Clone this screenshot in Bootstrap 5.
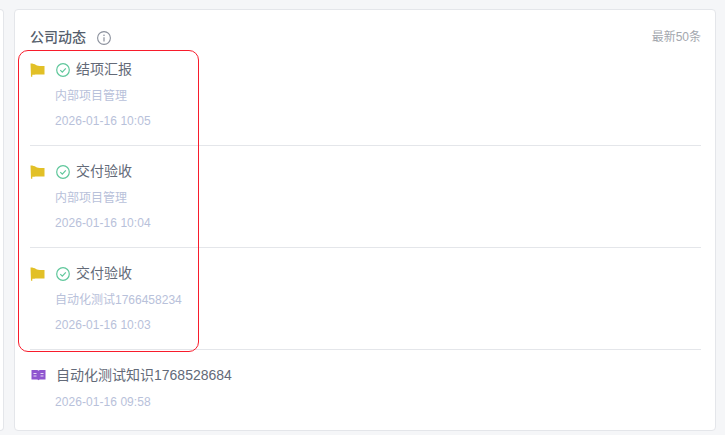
<!DOCTYPE html>
<html lang="en">
<head>
    <meta charset="UTF-8">
    <meta name="viewport" content="width=device-width, initial-scale=1.0">
    <title>公司动态</title>
    <link rel="stylesheet" href="https://cdn.jsdelivr.net/npm/bootstrap@5.3.0/dist/css/bootstrap.min.css">
    <style>
        html, body { height: 100%; overflow: hidden; }
        body {
            background: #f5f6f8;
            font-family: "Liberation Sans", "Noto Sans CJK SC", sans-serif;
        }
        .page-wrap { height: 435px; padding: 9px 9px 4px 0; gap: 10px; }
        .side-stub {
            width: 4px;
            background: #fff;
            border: 1px solid #e4e6ea;
            border-left: 0;
            border-radius: 0 4px 4px 0;
        }
        .feed-card {
            border: 1px solid #e4e6ea;
            border-radius: 4px;
            padding: 0 14px 0 15px;
        }
        .feed-head { height: 34px; padding-top: 20px; }
        .feed-title { font-size: 14px; line-height: 14px; font-weight: 500; color: #555e6c; }
        .info-mark { margin: 2px 0 0 3px; }
        .feed-count { font-size: 12px; line-height: 14px; color: #a3a7ae; }
        .feed-row { padding: 15px 0 14px; border-bottom: 1px solid #e4e6ea; }
        .row-title { font-size: 14px; line-height: 20px; color: #636a78; }
        .row-sub { font-size: 12px; line-height: 20px; color: #b8c1da; margin: 7px 0 0 25px; }
        .row-date { font-size: 12px; line-height: 20px; color: #b8c1da; margin: 5px 0 0 25px; letter-spacing: .06px; }
        .last-date { margin-top: 7px; }
        .flag-mark { margin-top: 2px; }
        .status-mark { margin: 2px 6px 0 10px; }
        .book-mark { margin-left: 1px; margin-right: 10px; }
        .red-frame {
            position: absolute;
            left: 3px;
            top: 40px;
            width: 181px;
            height: 302px;
            border: 1px solid #f81c2c;
            border-radius: 10px;
            pointer-events: none;
        }
    </style>
</head>
<body>
    <div class="page-wrap d-flex">
        <div class="side-stub flex-shrink-0"></div>
        <div class="feed-card card flex-grow-1 position-relative">
            <div class="feed-head d-flex justify-content-between">
                <div class="d-flex align-items-center gap-2">
                    <span class="feed-title">公司动态</span>
                    <svg class="info-mark" width="14" height="14" viewBox="0 0 14 14" fill="none">
                        <circle cx="7" cy="7" r="6.4" stroke="#8a909c" stroke-width="1.1"/>
                        <circle cx="7" cy="4.2" r=".8" fill="#8a909c"/>
                        <path d="M7 6.200v4.200" stroke="#8a909c" stroke-width="1.2"/>
                    </svg>
                </div>
                <span class="feed-count">最新50条</span>
            </div>

            <div class="feed-row">
                <div class="row-title d-flex align-items-center">
                    <svg class="flag-mark flex-shrink-0" width="16" height="14" viewBox="0 0 16 14"><path d="M0.500 0.500C3 0.500 4.500 1 6 2C7.500 3 10 3.200 14.500 3V11.500H6.500C5 11.500 4 11.800 2.300 11.800V13.800H1Z" fill="#e2c026"/></svg>
                    <svg class="status-mark flex-shrink-0" width="14" height="14" viewBox="0 0 14 14" fill="none"><circle cx="7" cy="7" r="6.300" stroke="#5fc79b" stroke-width="1.200"/><path d="M4.300 7.200l2 2 3.500-3.800" stroke="#5fc79b" stroke-width="1.200"/></svg>
                    <span>结项汇报</span>
                </div>
                <div class="row-sub">内部项目管理</div>
                <div class="row-date">2026-01-16 10:05</div>
            </div>

            <div class="feed-row">
                <div class="row-title d-flex align-items-center">
                    <svg class="flag-mark flex-shrink-0" width="16" height="14" viewBox="0 0 16 14"><path d="M0.500 0.500C3 0.500 4.500 1 6 2C7.500 3 10 3.200 14.500 3V11.500H6.500C5 11.500 4 11.800 2.300 11.800V13.800H1Z" fill="#e2c026"/></svg>
                    <svg class="status-mark flex-shrink-0" width="14" height="14" viewBox="0 0 14 14" fill="none"><circle cx="7" cy="7" r="6.300" stroke="#5fc79b" stroke-width="1.200"/><path d="M4.300 7.200l2 2 3.500-3.800" stroke="#5fc79b" stroke-width="1.200"/></svg>
                    <span>交付验收</span>
                </div>
                <div class="row-sub">内部项目管理</div>
                <div class="row-date">2026-01-16 10:04</div>
            </div>

            <div class="feed-row">
                <div class="row-title d-flex align-items-center">
                    <svg class="flag-mark flex-shrink-0" width="16" height="14" viewBox="0 0 16 14"><path d="M0.500 0.500C3 0.500 4.500 1 6 2C7.500 3 10 3.200 14.500 3V11.500H6.500C5 11.500 4 11.800 2.300 11.800V13.800H1Z" fill="#e2c026"/></svg>
                    <svg class="status-mark flex-shrink-0" width="14" height="14" viewBox="0 0 14 14" fill="none"><circle cx="7" cy="7" r="6.300" stroke="#5fc79b" stroke-width="1.200"/><path d="M4.300 7.200l2 2 3.500-3.800" stroke="#5fc79b" stroke-width="1.200"/></svg>
                    <span>交付验收</span>
                </div>
                <div class="row-sub">自动化测试1766458234</div>
                <div class="row-date">2026-01-16 10:03</div>
            </div>

            <div class="feed-row border-0">
                <div class="row-title d-flex align-items-center">
                    <svg class="book-mark flex-shrink-0" width="15" height="14" viewBox="0 0 15 14"><path d="M0.500 2H6C6.800 2 7.200 2.300 7.500 2.800C7.800 2.300 8.200 2 9 2H14.500V11.500H9C8.300 11.500 7.900 11.700 7.500 12.300C7.100 11.700 6.700 11.500 6 11.500H0.500Z" fill="#8f55cf"/><path d="M2.500 5.500H5.500M2.500 8H5.500M9.500 5.500H12.500M9.500 8H12.500" stroke="#e6d8f5" stroke-width="1"/></svg>
                    <span>自动化测试知识1768528684</span>
                </div>
                <div class="row-date last-date">2026-01-16 09:58</div>
            </div>

            <div class="red-frame"></div>
        </div>
    </div>
    <script src="https://cdn.jsdelivr.net/npm/bootstrap@5.3.0/dist/js/bootstrap.bundle.min.js"></script>
</body>
</html>
